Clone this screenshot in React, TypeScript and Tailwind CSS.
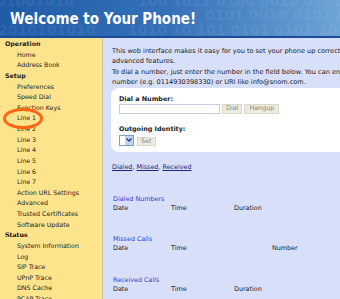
import React from 'react';

const menu = [
  { head: 'Operation', items: ['Home', 'Address Book'] },
  {
    head: 'Setup',
    items: [
      'Preferences',
      'Speed Dial',
      'Function Keys',
      'Line 1',
      'Line 2',
      'Line 3',
      'Line 4',
      'Line 5',
      'Line 6',
      'Line 7',
      'Action URL Settings',
      'Advanced',
      'Trusted Certificates',
      'Software Update',
    ],
  },
  {
    head: 'Status',
    serif: true,
    items: ['System Information', 'Log', 'SIP Trace', 'UPnP Trace', 'DNS Cache', 'PCAP Trace'],
  },
];

const CallTable = ({ title, cols }: { title: string; cols: [string, string][] }) => (
  <div className="mt-[22.5px] pl-px leading-[9px]">
    <div className="text-[#3343cc]">{title}</div>
    <div className="flex text-[#222]">
      {cols.map(([label, w]) => (
        <div key={label} className={w}>
          {label}
        </div>
      ))}
    </div>
  </div>
);

export default function App() {
  return (
    <div className="w-[340px] h-[299px] overflow-hidden bg-[#d8dff8] font-['DejaVu_Sans',sans-serif] text-[6.4px] text-[#222]">
      {/* header */}
      <div className="relative h-[38px] overflow-hidden border-b-2 border-[#1c4e97] bg-gradient-to-r from-[#1f5ba6] via-[#3571b9] to-[#6ea3d6]">
        {/* binary digits in the header background */}
        <svg className="absolute inset-0" width="340" height="36" aria-hidden="true">
          <g fill="#ffffff" fillOpacity="0.075" fontFamily="DejaVu Sans" fontWeight="bold" fontSize="14">
            <text x="-4" y="6">01001010</text>
            <text x="138" y="6">100 1011 0100 0010 0101</text>
            <text x="205" y="20">0101 0010 0101 0010</text>
            <text x="-2" y="35">2010101010</text>
            <text x="128" y="35">1010 10 101 0101 0101 1010</text>
          </g>
        </svg>
        <div className="relative pl-[10px] pt-[9px] font-['DejaVu_Sans_Condensed','DejaVu_Sans',sans-serif] text-[15px] font-bold leading-[20px] text-white">
          Welcome to Your Phone!
        </div>
      </div>

      <div className="flex h-[261px]">
        {/* sidebar */}
        <div className="relative w-[103px] shrink-0 border-r border-[#c8c2a4] bg-[#fee38d] pl-[5px] pt-[1px] text-[6.3px] leading-[10.62px] text-[#1e1e1e]">
          {menu.map((sec) => (
            <div key={sec.head}>
              <div
                className={
                  sec.serif
                    ? "font-['DejaVu_Serif',serif] font-bold text-black"
                    : 'font-bold'
                }
              >
                {sec.head}
              </div>
              {sec.items.map((it) => (
                <div key={it} className="pl-[12px] whitespace-nowrap">
                  {it}
                </div>
              ))}
            </div>
          ))}
          <div className="absolute left-[3px] top-[70px] h-[21px] w-[40px] rounded-[50%] border-[3px] border-[#ff6514]" />
        </div>

        {/* main */}
        <div className="min-w-0 flex-1 overflow-hidden pl-[9px] pt-[7.5px]">
          <div className="whitespace-nowrap text-[6.55px] leading-[10.6px]">
            <div>This web interface makes it easy for you to set your phone up correctly and to use all of its</div>
            <div>advanced features.</div>
            <div>To dial a number, just enter the number in the field below. You can enter a phone</div>
            <div>number (e.g. 0114930398330) or URI like info@snom.com.</div>
          </div>

          <div className="ml-[-1px] h-[64px] w-[300px] rounded-l-[8px] bg-white pl-[8px] pt-[7px]">
            <div className="font-bold leading-[9px]">Dial a Number:</div>
            <div className="flex h-[10px] gap-[2px]">
              <div className="h-[10px] w-[101px] border border-[#c4cddf] bg-white" />
              <div className="flex h-[10px] items-center border border-[#d8d8cc] bg-[#ebebe0] px-[3px] text-[#8a8a80]">
                Dial
              </div>
              <div className="flex h-[10px] items-center border border-[#d8d8cc] bg-[#ebebe0] px-[4px] text-[#8a8a80]">
                Hangup
              </div>
            </div>
            <div className="mt-[11px] font-bold leading-[9px]">Outgoing Identity:</div>
            <div className="mt-[1px] flex items-end gap-[3px]">
              <div className="flex h-[11px] w-[15px] border border-[#7f9db9] bg-white">
                <div className="w-[5px]" />
                <div className="flex flex-1 items-center justify-center bg-[#c3d3f2]">
                  <svg width="6" height="4" viewBox="0 0 6 4">
                    <path d="M0.5 0.5 L3 3 L5.5 0.5" fill="none" stroke="#1d3f8a" strokeWidth="1.3" />
                  </svg>
                </div>
              </div>
              <div className="flex h-[9px] items-center border border-[#d8d8cc] bg-[#ebebe0] px-[3px] text-[#8a8a80]">
                Set
              </div>
            </div>
          </div>

          <div className="mt-[10px] leading-[10.6px] text-[#1c2484]">
            <span className="underline">Dialed</span>, <span className="underline">Missed</span>,{' '}
            <span className="underline">Received</span>
          </div>

          <CallTable
            title="Dialed Numbers"
            cols={[
              ['Date', 'w-[58px]'],
              ['Time', 'w-[63px]'],
              ['Duration', ''],
            ]}
          />
          <CallTable
            title="Missed Calls"
            cols={[
              ['Date', 'w-[58px]'],
              ['Time', 'w-[101px]'],
              ['Number', ''],
            ]}
          />
          <CallTable
            title="Received Calls"
            cols={[
              ['Date', 'w-[58px]'],
              ['Time', 'w-[63px]'],
              ['Duration', ''],
            ]}
          />
        </div>
      </div>
    </div>
  );
}
